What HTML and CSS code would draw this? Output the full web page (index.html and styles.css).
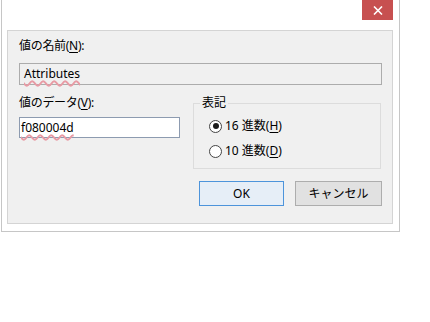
FILE: index.html
```html
<!DOCTYPE html>
<html lang="ja">
<head>
<meta charset="utf-8">
<link rel="stylesheet" href="styles.css">
</head>
<body>
<div class="window">
  <div class="titlebar">
    <div class="close">
      <svg width="10" height="9" viewBox="0 0 10 9"><path d="M1 0.5 L9 8.5 M9 0.5 L1 8.5" stroke="#fff" stroke-width="1.6" fill="none"/></svg>
    </div>
  </div>
  <div class="frame">
    <div class="client">
      <div class="label first">値の名前(<u>N</u>):</div>
      <div class="namebox"><span class="spell">Attributes</span></div>
      <div class="row">
        <div class="datacol">
          <div class="label">値のデータ(<u>V</u>):</div>
          <div class="databox"><span class="spell">f080004d</span></div>
        </div>
        <fieldset class="group">
          <legend>表記</legend>
          <div class="radios">
            <div class="radio"><span class="dot checked"></span><span>16 進数(<u>H</u>)</span></div>
            <div class="radio"><span class="dot"></span><span>10 進数(<u>D</u>)</span></div>
          </div>
        </fieldset>
      </div>
      <div class="buttons">
        <div class="btn ok">OK</div>
        <div class="btn cancel">キャンセル</div>
      </div>
    </div>
  </div>
</div>
</body>
</html>
```
FILE: styles.css
```css
html, body {
  margin: 0;
  padding: 0;
  background: #fff;
}
body {
  font-family: "Noto Sans", "Noto Sans CJK JP", sans-serif;
  font-size: 12px;
  color: #000;
}
.window {
  margin-left: 1px;
  width: 397px;
  border: 1px solid #c6c6c6;
  border-top: none;
  background: #fff;
}
.titlebar {
  height: 30px;
  display: flex;
  justify-content: flex-end;
  align-items: flex-start;
  padding-right: 6px;
}
.close {
  width: 31px;
  height: 20px;
  background: #c75050;
  display: flex;
  align-items: center;
  justify-content: center;
}
.frame {
  padding: 0 6px 7px 5px;
}
.client {
  background: #f0f0f0;
  border: 1px solid #d4d4d4;
  padding: 7px 10px 17px 11px;
}
.label {
  line-height: 16px;
  height: 16px;
  letter-spacing: -0.3px;
}
u {
  text-decoration-thickness: 1px;
  text-underline-offset: 2px;
}
.namebox {
  margin-top: 9px;
  height: 20px;
  border: 1px solid #acacac;
  background: #f0f0f0;
  padding-left: 4px;
  line-height: 20px;
}
.spell {
  text-decoration: underline wavy #e89aa4;
  text-decoration-thickness: 1.5px;
  text-underline-offset: 2px;
}
.row {
  margin-top: 10px;
  display: flex;
  gap: 13px;
  align-items: flex-start;
}
.datacol {
  width: 161px;
}
.databox {
  margin-top: 6px;
  height: 19px;
  border: 1px solid #8d9bb0;
  background: #fff;
  padding-left: 1px;
  line-height: 19px;
}
.group {
  margin: 0;
  width: 188px;
  box-sizing: border-box;
  border: 1px solid #dcdcdc;
  padding: 7px 10px 9px 6px;
  min-width: 0;
}
.group legend {
  padding: 0 2px;
  line-height: 16px;
}
.radios {
  display: flex;
  flex-direction: column;
  gap: 9px;
  padding-left: 9px;
}
.radio {
  display: flex;
  align-items: center;
  gap: 3px;
  height: 16px;
  line-height: 16px;
}
.dot {
  width: 11px;
  height: 11px;
  border: 1px solid #444;
  border-radius: 50%;
  background: #fff;
  display: flex;
  align-items: center;
  justify-content: center;
  box-sizing: content-box;
}
.dot.checked::after {
  content: "";
  width: 6px;
  height: 6px;
  border-radius: 50%;
  background: #1a1a1a;
}
.buttons {
  margin-top: 12px;
  display: flex;
  justify-content: flex-end;
  gap: 11px;
}
.btn {
  height: 23px;
  line-height: 23px;
  text-align: center;
  box-sizing: content-box;
}
.ok {
  width: 83px;
  border: 1px solid #4d94db;
  background: #e6eef7;
}
.cancel {
  width: 85px;
  border: 1px solid #adadad;
  background: #e1e1e1;
}
```
